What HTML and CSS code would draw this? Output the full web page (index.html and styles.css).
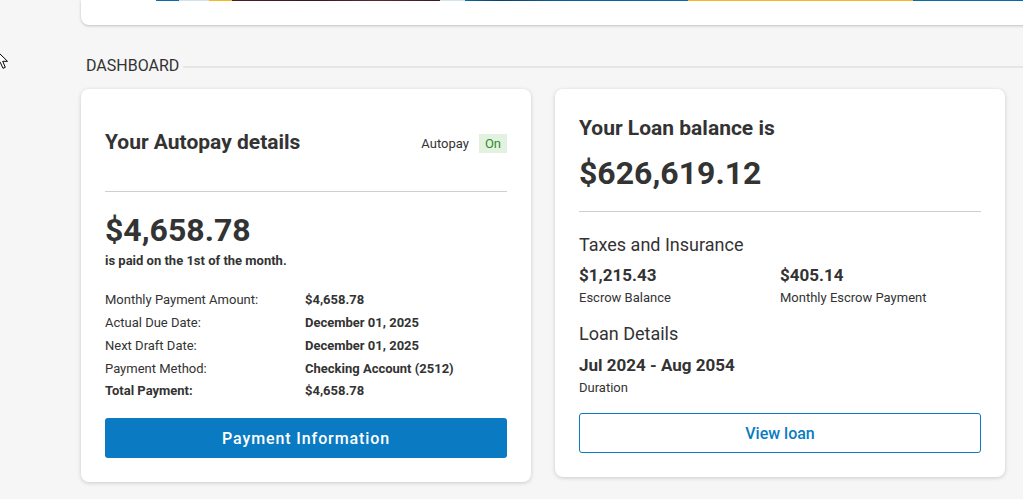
FILE: index.html
```html
<!DOCTYPE html>
<html lang="en">
<head>
<meta charset="utf-8">
<title>Dashboard</title>
<link rel="stylesheet" href="styles.css">
</head>
<body>
<svg class="cursor" width="14" height="20" viewBox="0 0 14 20" aria-hidden="true">
  <path d="M0.5 0.5 L0.5 16 L4.3 12.3 L7 18.3 L9.3 17.3 L6.7 11.3 L11.5 11.3 Z" fill="#fff" stroke="#000" stroke-width="1" stroke-linejoin="miter"/>
</svg>
<main class="page">
  <div class="top-card">
    <div class="strip">
      <span class="seg seg-blue w23"></span>
      <span class="seg seg-light w30"></span>
      <span class="seg seg-yellow w23"></span>
      <span class="seg seg-maroon w208"></span>
      <span class="seg seg-pale w25"></span>
      <span class="seg seg-blue-grad w223"></span>
      <span class="seg seg-yellow w225"></span>
      <span class="seg seg-blue grow"></span>
    </div>
  </div>

  <section class="dashboard">
    <h2 class="section-title"><span class="section-text">DASHBOARD</span><span class="section-rule"></span></h2>

    <div class="cards">
      <article class="card autopay">
        <div class="autopay-head">
          <h3 class="card-title">Your Autopay details</h3>
          <div class="autopay-status">
            <span class="status-label">Autopay</span>
            <span class="badge-on">On</span>
          </div>
        </div>
        <hr class="divider divider-autopay">
        <div class="big-amount amount-autopay">$4,658.78</div>
        <div class="paid-note">is paid on the 1st of the month.</div>
        <dl class="details">
          <dt>Monthly Payment Amount:</dt><dd>$4,658.78</dd>
          <dt>Actual Due Date:</dt><dd>December 01, 2025</dd>
          <dt>Next Draft Date:</dt><dd>December 01, 2025</dd>
          <dt>Payment Method:</dt><dd>Checking Account (2512)</dd>
          <dt class="strong">Total Payment:</dt><dd>$4,658.78</dd>
        </dl>
        <button class="btn btn-primary">Payment Information</button>
      </article>

      <article class="card loan">
        <h3 class="card-title">Your Loan balance is</h3>
        <div class="big-amount amount-loan">$626,619.12</div>
        <hr class="divider divider-loan">
        <h4 class="sub-title taxes-title">Taxes and Insurance</h4>
        <div class="escrow-grid">
          <div class="stat">
            <div class="stat-value">$1,215.43</div>
            <div class="stat-label">Escrow Balance</div>
          </div>
          <div class="stat">
            <div class="stat-value">$405.14</div>
            <div class="stat-label">Monthly Escrow Payment</div>
          </div>
        </div>
        <h4 class="sub-title details-title">Loan Details</h4>
        <div class="duration-value">Jul 2024 - Aug 2054</div>
        <div class="stat-label duration-label">Duration</div>
        <button class="btn btn-outline">View loan</button>
      </article>
    </div>
  </section>
</main>
</body>
</html>
```

FILE: styles.css
```css
* { box-sizing: border-box; }

html, body {
  margin: 0;
  padding: 0;
  overflow: hidden;
}

body {
  background: #f6f6f6;
  font-family: Roboto, "Liberation Sans", Arial, sans-serif;
  color: #333;
  width: 1023px;
  height: 499px;
  position: relative;
}

.cursor {
  position: absolute;
  left: -4px;
  top: 50px;
  z-index: 5;
}

.page {
  padding-left: 81px;
}

/* top card */
.top-card {
  height: 25px;
  margin-right: -40px;
  background: #fff;
  border-radius: 0 0 0 8px;
  box-shadow: 0 1px 3px rgba(0, 0, 0, 0.22);
  padding-left: 75px;
}

.strip {
  display: flex;
  height: 1px;
}

.seg { display: block; height: 1px; }
.w23 { width: 23px; }
.w25 { width: 25px; }
.w30 { width: 30px; }
.w208 { width: 208px; }
.w223 { width: 223px; }
.w225 { width: 225px; }
.grow { flex: 1; }

.seg-blue { background: #0b6aa8; }
.seg-light { background: #cfe2ee; }
.seg-yellow { background: #f6b81d; }
.seg-maroon { background: linear-gradient(90deg, #4a1e28, #3a1620 40%, #5a2a30 70%, #3a1a20); }
.seg-pale { background: #d6e2ea; }
.seg-blue-grad { background: linear-gradient(90deg, #0b6aa8 0%, #0a3f68 15%, #0b5e98 40%, #0b6aa8 100%); }

/* dashboard title */
.section-title {
  display: flex;
  align-items: center;
  margin: 31px -40px 0 0;
  padding-left: 5px;
  font-size: 16px;
  font-weight: 400;
  line-height: 20px;
  color: #333;
}

.section-text { flex: none; }

.section-rule {
  flex: 1;
  height: 2px;
  margin-left: 4px;
  margin-top: 2px;
  background: #e6e6e6;
}

/* cards */
.cards {
  display: grid;
  grid-template-columns: 450px 450px;
  column-gap: 24px;
  align-items: start;
  margin-top: 13px;
}

.card {
  background: #fff;
  border-radius: 8px;
  box-shadow: 0 1px 4px rgba(0, 0, 0, 0.18);
  padding: 24px;
}

.card-title {
  margin: 0;
  font-size: 21px;
  font-weight: 700;
  line-height: 25px;
  color: #333;
}

.autopay-head {
  display: flex;
  justify-content: space-between;
  align-items: flex-start;
  padding-top: 17px;
}

.autopay-status {
  display: flex;
  align-items: center;
  gap: 10px;
  margin-top: 4px;
  font-size: 13px;
}

.status-label { color: #333; }

.badge-on {
  display: inline-block;
  height: 19px;
  line-height: 19px;
  padding: 0 6px;
  background: #e3f1e1;
  color: #2e8f2a;
  font-size: 13px;
}

.divider {
  border: 0;
  height: 1px;
  background: #cfcfcf;
  margin: 0;
}

.divider-autopay { margin-top: 36px; }

.big-amount {
  font-size: 32px;
  font-weight: 700;
  line-height: 38px;
  color: #333;
}

.amount-autopay { margin-top: 19px; }

.paid-note {
  margin-top: 4px;
  font-size: 13px;
  font-weight: 700;
  line-height: 16px;
}

.details {
  display: grid;
  grid-template-columns: 200px 1fr;
  grid-auto-rows: 22.75px;
  align-items: center;
  margin: 20px 0 0;
  font-size: 13px;
  line-height: 18px;
}

.details dt { margin: 0; color: #333; }
.details dt.strong { font-weight: 700; }
.details dd { margin: 0; font-weight: 700; }

.btn {
  display: block;
  width: 100%;
  font-family: Roboto, "Liberation Sans", Arial, sans-serif;
  font-size: 16px;
  font-weight: 500;
  border-radius: 3px;
  cursor: pointer;
}

.btn-primary {
  margin-top: 15px;
  height: 40px;
  padding-top: 2px;
  background: #0a7bc2;
  color: #fff;
  border: 0;
  letter-spacing: 0.9px;
}

.loan { padding-top: 27px; }

.amount-loan { margin-top: 13px; }
.divider-loan { margin-top: 19px; }

.sub-title {
  margin: 0;
  font-size: 18px;
  font-weight: 400;
  line-height: 24px;
  color: #333;
}

.taxes-title { margin-top: 21px; }

.escrow-grid {
  display: grid;
  grid-template-columns: 1fr 1fr;
  margin-top: 8px;
}

.stat-value {
  font-size: 17px;
  font-weight: 700;
  line-height: 20px;
}

.stat-label {
  margin-top: 4px;
  font-size: 13px;
  line-height: 18px;
  color: #333;
}

.details-title { margin-top: 15px; }

.duration-value {
  margin-top: 7px;
  font-size: 17px;
  font-weight: 700;
  line-height: 24px;
}

.duration-label { margin-top: 2px; }

.btn-outline {
  margin-top: 16px;
  height: 40px;
  background: #fff;
  color: #0a7bc2;
  border: 1px solid #0a7bc2;
}
```
